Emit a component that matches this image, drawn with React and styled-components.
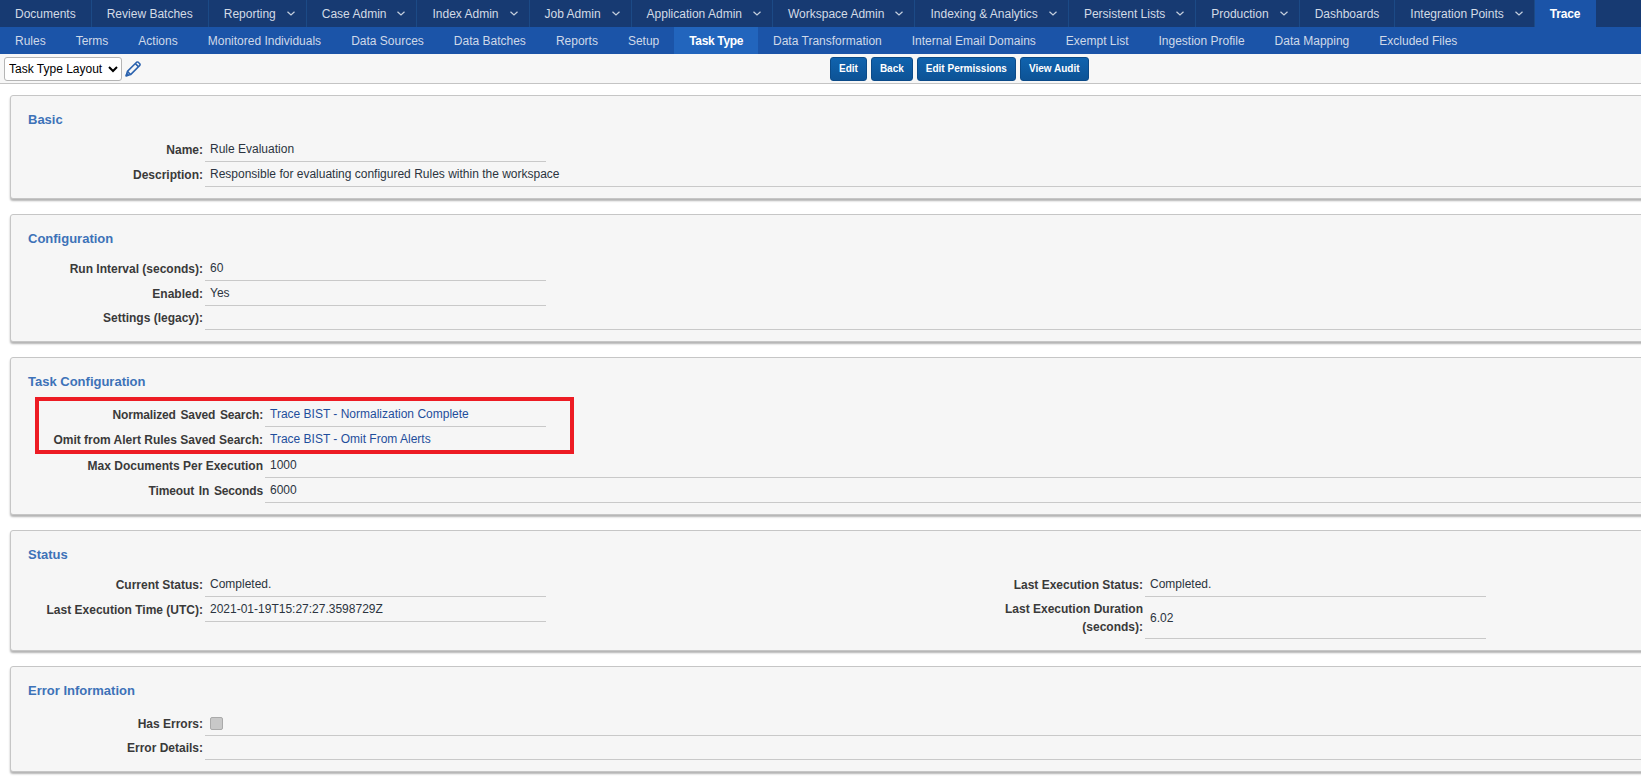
import React from 'react'
import styled, { createGlobalStyle } from 'styled-components'

const GlobalStyle = createGlobalStyle`
  html, body {
    margin: 0;
    padding: 0;
    background: #fff;
    overflow: hidden;
  }
  body {
    font-family: "Liberation Sans", Arial, sans-serif;
    font-size: 12px;
    color: #333;
  }
`

const Page = styled.div`
  width: 1641px;
  height: 783px;
  overflow: hidden;
`

const TopNav = styled.nav`
  display: flex;
  height: 27px;
  background: #173a72;
`

const TopItem = styled.a`
  display: flex;
  align-items: center;
  gap: 11px;
  padding: 0 ${p => (p.$menu ? 11 : 15)}px 0 15px;
  color: ${p => (p.$active ? '#fff' : '#d3dbe6')};
  font-weight: ${p => (p.$active ? 'bold' : 'normal')};
  letter-spacing: ${p => (p.$active ? '-0.2px' : 'normal')};
  background: ${p => (p.$active ? '#1b54a8' : 'transparent')};
  border-right: 1px solid ${p => (p.$active ? '#1b54a8' : '#1c4a86')};
`

const SubNav = styled.nav`
  display: flex;
  height: 27px;
  background: #1b54a8;
`

const SubItem = styled.a`
  display: flex;
  align-items: center;
  padding: 0 15px;
  color: ${p => (p.$active ? '#fff' : '#cfd9e8')};
  font-weight: ${p => (p.$active ? 'bold' : 'normal')};
  letter-spacing: ${p => (p.$active ? '-0.35px' : 'normal')};
  background: ${p => (p.$active ? '#2265bd' : 'transparent')};
`

const Toolbar = styled.div`
  display: flex;
  align-items: center;
  height: 30px;
  box-sizing: border-box;
  padding: 3px 0 3px 4px;
  background: #f7f7f7;
  border-bottom: 1px solid #c4c4c4;
`

const LayoutSelect = styled.select`
  width: 118px;
  height: 24px;
  box-sizing: border-box;
  padding: 0;
  font-family: inherit;
  font-size: 12px;
  color: #000;
  background: #fff;
  border: 1px solid #b5b5b5;
  border-radius: 3px;
`

const EditLayout = styled.span`
  display: flex;
  margin-left: 3px;
  color: #2a62ae;
`

const Actions = styled.div`
  display: flex;
  gap: 4px;
  margin-left: 689px;
`

const ActionButton = styled.button`
  height: 24px;
  padding: 0 8px;
  font-family: inherit;
  font-size: 10px;
  font-weight: bold;
  color: #fff;
  background: linear-gradient(#1063ae, #0d5396);
  border: 1px solid #0b4a88;
  border-radius: 3px;
`

const Content = styled.main`
  display: flex;
  flex-direction: column;
  gap: 15px;
  width: 1700px;
  padding: 11px 0 0 10px;
`

const Card = styled.section`
  box-sizing: border-box;
  padding: 16px 0 11px;
  background: #f6f6f6;
  border: 1px solid #c6c6c6;
  border-radius: 3px;
  box-shadow: 0 2px 2px #b4b4b4;
`

const CardTitle = styled.h2`
  margin: 0 0 ${p => (p.$roomy ? 13 : 10)}px 17px;
  font-size: 13px;
  line-height: 15px;
  font-weight: bold;
  color: #3d72b8;
`

const Columns = styled.div`
  display: flex;
`

const Column = styled.div`
  flex: none;
  width: ${p => p.$width}px;
`

const Row = styled.div`
  display: flex;
  align-items: center;
  min-height: ${p => (p.$empty ? 24 : 25)}px;
`

const Label = styled.div`
  flex: none;
  box-sizing: border-box;
  width: ${p => p.$width}px;
  padding: 3px 0 3px 10px;
  text-align: right;
  line-height: 18px;
  font-weight: bold;
  color: #3a3a3a;
  word-spacing: ${p => (p.$spaced ? 1.5 : 0)}px;
  letter-spacing: ${p => (p.$spaced ? '-0.13px' : 'normal')};
`

const Value = styled.div`
  display: flex;
  align-items: center;
  align-self: stretch;
  box-sizing: border-box;
  margin-left: 2px;
  padding-left: 5px;
  width: ${p => (p.$width ? `${p.$width}px` : 'auto')};
  flex: ${p => (p.$width ? 'none' : 1)};
  color: ${p => (p.$link ? '#1f4e9c' : '#2b3440')};
  border-bottom: 1px solid #c9c9c9;
`

const Highlight = styled.div`
  position: relative;
  margin-bottom: 1px;

  &::after {
    content: '';
    position: absolute;
    left: 24px;
    top: -5px;
    width: 531px;
    height: 49px;
    border: 4px solid #ed1c24;
  }
`

const Check = styled.span`
  width: 11px;
  height: 11px;
  background: #c8c8c8;
  border: 1px solid #aaa;
  border-radius: 2px;
`

const Chevron = () => (
  <svg width="8" height="5" viewBox="0 0 8 5" fill="none" stroke="#c6d0de" strokeWidth="1.2">
    <path d="M0.5 0.7 L4 4 L7.5 0.7" />
  </svg>
)

const Pen = () => (
  <svg width="16" height="16" viewBox="0 0 16 16" fill="none" stroke="currentColor" strokeWidth="1.5" strokeLinejoin="round">
    <path d="M1.2 14.8 L2.4 10.4 L11.6 1.2 Q12.4 0.6 13.2 1.2 L14.8 2.8 Q15.4 3.6 14.8 4.4 L5.6 13.6 Z" />
    <path d="M2.4 10.4 L5.6 13.6 M10.4 2.6 L13.4 5.6" />
    <path d="M1.2 14.8 L1.8 12.6 L3.4 14.2 Z" fill="currentColor" />
  </svg>
)

const topItems = [
  ['Documents'],
  ['Review Batches'],
  ['Reporting', true],
  ['Case Admin', true],
  ['Index Admin', true],
  ['Job Admin', true],
  ['Application Admin', true],
  ['Workspace Admin', true],
  ['Indexing & Analytics', true],
  ['Persistent Lists', true],
  ['Production', true],
  ['Dashboards'],
  ['Integration Points', true],
]

const subItems = [
  'Rules',
  'Terms',
  'Actions',
  'Monitored Individuals',
  'Data Sources',
  'Data Batches',
  'Reports',
  'Setup',
  'Task Type',
  'Data Transformation',
  'Internal Email Domains',
  'Exempt List',
  'Ingestion Profile',
  'Data Mapping',
  'Excluded Files',
]

const SHORT = 341
const NARROW = 281

const Field = ({ label, labelWidth = 192, width, link, spaced, children }) => (
  <Row $empty={!children}>
    <Label $width={labelWidth} $spaced={spaced}>{label}</Label>
    <Value $width={width} $link={link}>{children}</Value>
  </Row>
)

export default function App() {
  return (
    <Page>
      <GlobalStyle />
      <TopNav>
        {topItems.map(([name, menu]) => (
          <TopItem key={name} $menu={menu}>
            {name}
            {menu && <Chevron />}
          </TopItem>
        ))}
        <TopItem $active>Trace</TopItem>
      </TopNav>
      <SubNav>
        {subItems.map(name => (
          <SubItem key={name} $active={name === 'Task Type'}>{name}</SubItem>
        ))}
      </SubNav>
      <Toolbar>
        <LayoutSelect defaultValue="Task Type Layout">
          <option>Task Type Layout</option>
        </LayoutSelect>
        <EditLayout><Pen /></EditLayout>
        <Actions>
          <ActionButton>Edit</ActionButton>
          <ActionButton>Back</ActionButton>
          <ActionButton>Edit Permissions</ActionButton>
          <ActionButton>View Audit</ActionButton>
        </Actions>
      </Toolbar>
      <Content>
        <Card>
          <CardTitle>Basic</CardTitle>
          <Field label="Name:" width={SHORT}>Rule Evaluation</Field>
          <Field label="Description:">Responsible for evaluating configured Rules within the workspace</Field>
        </Card>
        <Card>
          <CardTitle>Configuration</CardTitle>
          <Field label="Run Interval (seconds):" width={SHORT}>60</Field>
          <Field label="Enabled:" width={SHORT}>Yes</Field>
          <Field label="Settings (legacy):" />
        </Card>
        <Card>
          <CardTitle $roomy>Task Configuration</CardTitle>
          <Highlight>
            <Field label="Normalized Saved Search:" labelWidth={252} width={NARROW} link spaced>Trace BIST - Normalization Complete</Field>
            <Field label="Omit from Alert Rules Saved Search:" labelWidth={252} width={NARROW} link>Trace BIST - Omit From Alerts</Field>
          </Highlight>
          <Field label="Max Documents Per Execution" labelWidth={252}>1000</Field>
          <Field label="Timeout In Seconds" labelWidth={252} spaced>6000</Field>
        </Card>
        <Card>
          <CardTitle>Status</CardTitle>
          <Columns>
            <Column $width={950}>
              <Field label="Current Status:" width={SHORT}>Completed.</Field>
              <Field label="Last Execution Time (UTC):" width={SHORT}>2021-01-19T15:27:27.3598729Z</Field>
            </Column>
            <Column $width={540}>
              <Field label="Last Execution Status:" labelWidth={182} width={SHORT}>Completed.</Field>
              <Field label="Last Execution Duration (seconds):" labelWidth={182} width={SHORT}>6.02</Field>
            </Column>
          </Columns>
        </Card>
        <Card>
          <CardTitle $roomy>Error Information</CardTitle>
          <Field label="Has Errors:"><Check /></Field>
          <Field label="Error Details:" />
        </Card>
      </Content>
    </Page>
  )
}
